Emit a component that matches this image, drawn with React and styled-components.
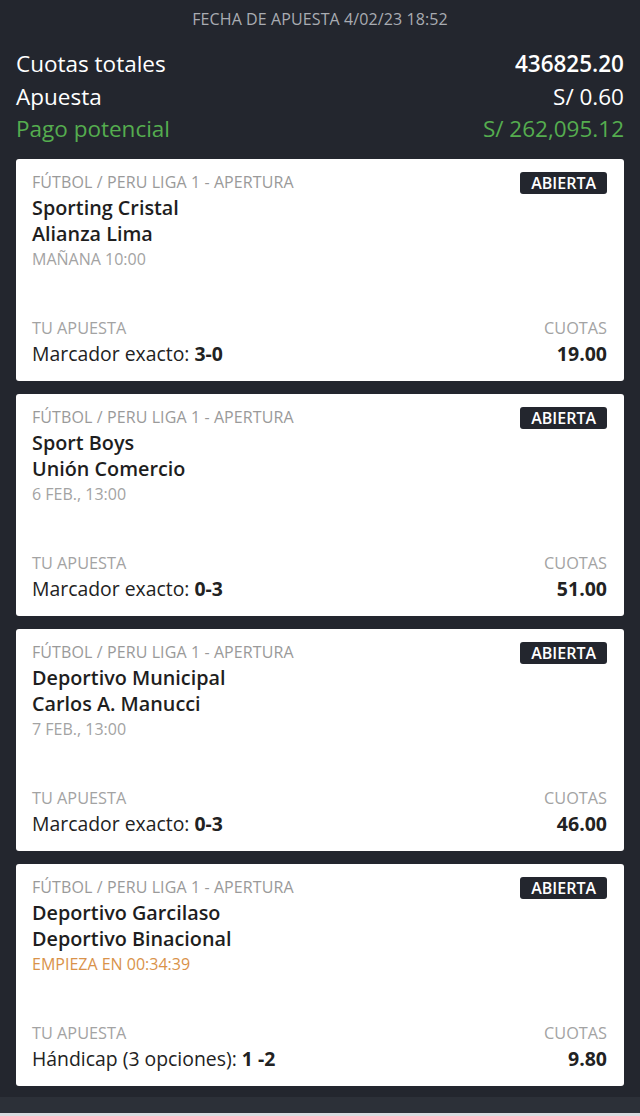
import React from "react";
import styled, { createGlobalStyle } from "styled-components";

const Global = createGlobalStyle`
  html, body { margin: 0; padding: 0; background: #23262e; }
  body { font-family: "Open Sans", "Noto Sans", sans-serif; -webkit-font-smoothing: antialiased; }
  * { box-sizing: border-box; }
`;

const Page = styled.div`
  width: 640px;
  height: 1116px;
  background: #23262e;
  display: flex;
  flex-direction: column;
  overflow: hidden;
`;

const DateLine = styled.div`
  text-align: center;
  color: #a9acb2;
  font-size: 16px;
  line-height: 20px;
  padding-top: 9px;
  letter-spacing: 0.1px;
`;

const Summary = styled.div`
  display: flex;
  flex-direction: column;
  padding: 19px 16px 13px;
`;

const SumRow = styled.div`
  display: flex;
  justify-content: space-between;
  align-items: center;
  font-size: 22.5px;
  line-height: 32.5px;
  color: ${(p) => (p.$green ? "#55ad4f" : "#ffffff")};
`;

const SumValue = styled.span`
  font-weight: ${(p) => (p.$bold ? 600 : 400)};
`;

const List = styled.div`
  display: flex;
  flex-direction: column;
  gap: 13px;
  padding: 0 16px;
`;

const Card = styled.div`
  background: #ffffff;
  border-radius: 3px;
  min-height: 222px;
  padding: 11px 17px 15px 16px;
  display: flex;
  flex-direction: column;
  justify-content: space-between;
`;

const TopRow = styled.div`
  display: flex;
  justify-content: space-between;
  align-items: flex-start;
`;

const Info = styled.div`
  display: flex;
  flex-direction: column;
`;

const Category = styled.div`
  color: #9a9a9a;
  font-size: 16px;
  line-height: 25px;
  letter-spacing: 0.1px;
`;

const Team = styled.div`
  color: #1e1e1e;
  font-size: 19.8px;
  font-weight: 600;
  line-height: 26px;
`;

const When = styled.div`
  color: ${(p) => (p.$live ? "#d9924a" : "#a3a3a3")};
  font-size: 16px;
  line-height: 24px;
`;

const Badge = styled.span`
  margin-top: 2px;
  background: #23262e;
  color: #ffffff;
  font-size: 16px;
  font-weight: 600;
  line-height: 22px;
  height: 22px;
  padding: 0 11px;
  border-radius: 3px;
`;

const BottomRow = styled.div`
  display: flex;
  justify-content: space-between;
  align-items: flex-end;
`;

const Col = styled.div`
  display: flex;
  flex-direction: column;
  align-items: ${(p) => (p.$right ? "flex-end" : "flex-start")};
`;

const Label = styled.div`
  color: #a3a3a3;
  font-size: 16.3px;
  line-height: 25px;
`;

const Bet = styled.div`
  color: #222222;
  font-size: 19.4px;
  line-height: 25px;
  b { font-weight: 700; }
`;

const Odds = styled.div`
  color: #222222;
  font-size: 19.5px;
  font-weight: 700;
  line-height: 25px;
`;

const Footer = styled.div`
  margin-top: auto;
  height: 19px;
  background: #2c3038;
  border-bottom: 3px solid #d8dadf;
`;

const bets = [
  { t1: "Sporting Cristal", t2: "Alianza Lima", when: "MAÑANA 10:00", market: "Marcador exacto:", pick: "3-0", odds: "19.00" },
  { t1: "Sport Boys", t2: "Unión Comercio", when: "6 FEB., 13:00", market: "Marcador exacto:", pick: "0-3", odds: "51.00" },
  { t1: "Deportivo Municipal", t2: "Carlos A. Manucci", when: "7 FEB., 13:00", market: "Marcador exacto:", pick: "0-3", odds: "46.00" },
  { t1: "Deportivo Garcilaso", t2: "Deportivo Binacional", when: "EMPIEZA EN 00:34:39", live: true, market: "Hándicap (3 opciones):", pick: "1 -2", odds: "9.80" },
];

export default function App() {
  return (
    <>
      <Global />
      <Page>
        <DateLine>FECHA DE APUESTA 4/02/23 18:52</DateLine>
        <Summary>
          <SumRow><span>Cuotas totales</span><SumValue $bold>436825.20</SumValue></SumRow>
          <SumRow><span>Apuesta</span><SumValue>S/ 0.60</SumValue></SumRow>
          <SumRow $green><span>Pago potencial</span><SumValue>S/ 262,095.12</SumValue></SumRow>
        </Summary>
        <List>
          {bets.map((b, i) => (
            <Card key={i}>
              <TopRow>
                <Info>
                  <Category>FÚTBOL / PERU LIGA 1 - APERTURA</Category>
                  <Team>{b.t1}</Team>
                  <Team>{b.t2}</Team>
                  <When $live={b.live}>{b.when}</When>
                </Info>
                <Badge>ABIERTA</Badge>
              </TopRow>
              <BottomRow>
                <Col>
                  <Label>TU APUESTA</Label>
                  <Bet>{b.market} <b>{b.pick}</b></Bet>
                </Col>
                <Col $right>
                  <Label>CUOTAS</Label>
                  <Odds>{b.odds}</Odds>
                </Col>
              </BottomRow>
            </Card>
          ))}
        </List>
        <Footer />
      </Page>
    </>
  );
}
